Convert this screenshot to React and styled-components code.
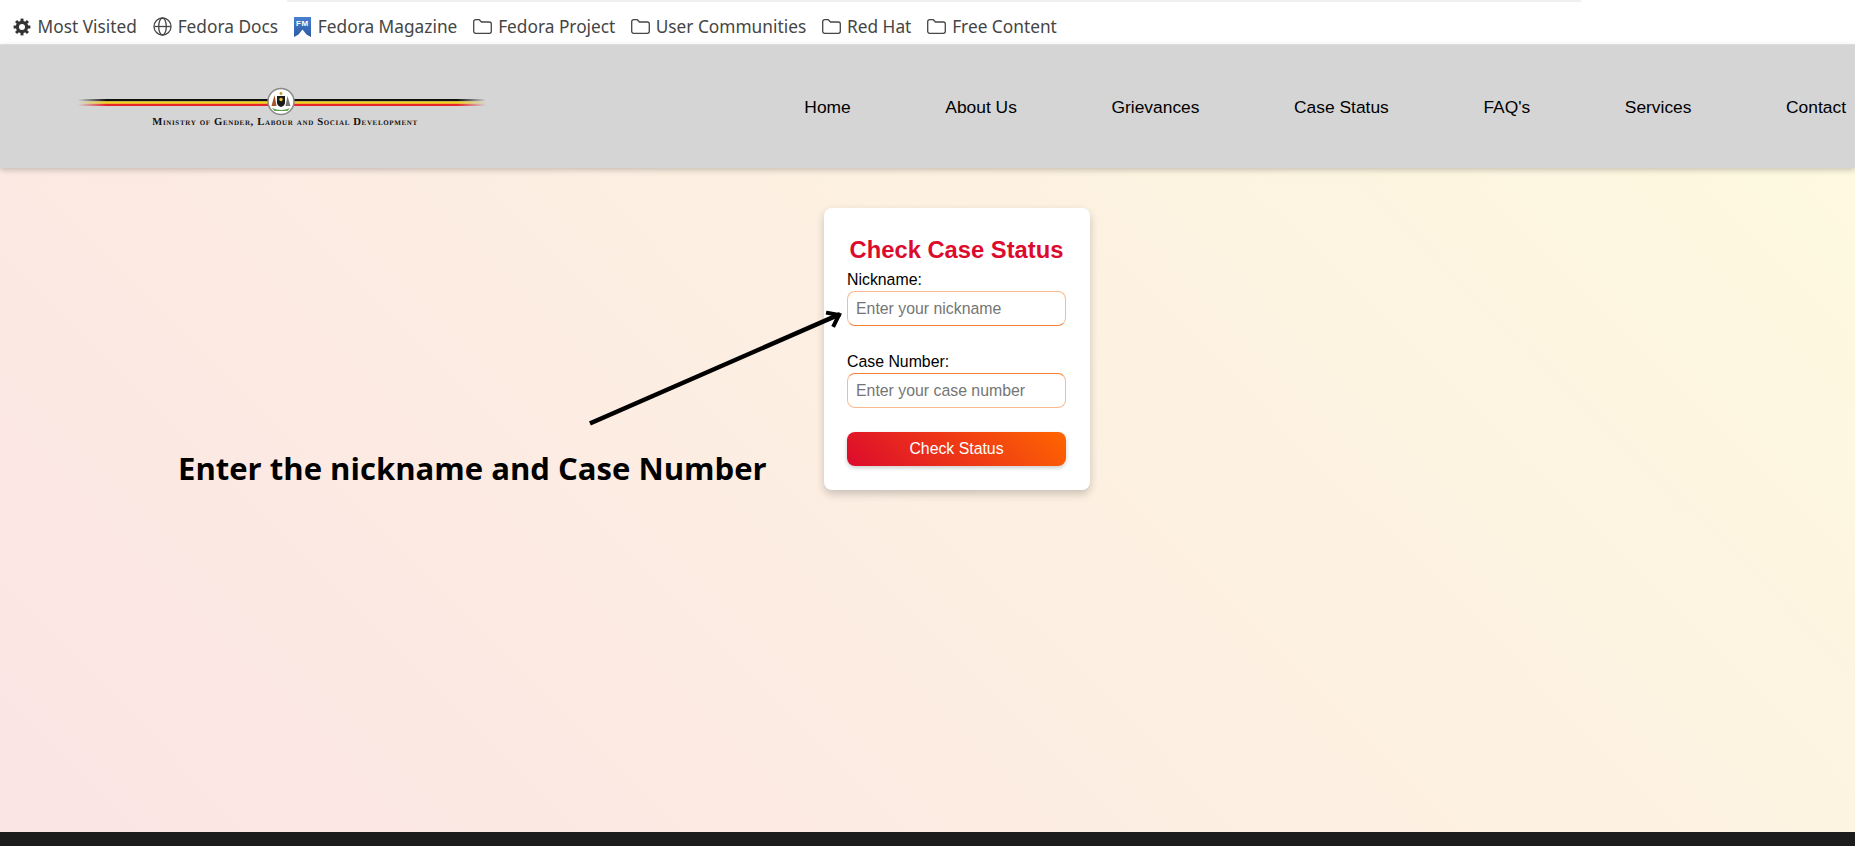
import React from "react";
import styled, { createGlobalStyle } from "styled-components";

const Global = createGlobalStyle`
  html, body { margin: 0; padding: 0; background: #fff; }
  body { font-family: "Liberation Sans", Arial, sans-serif; }
  * { box-sizing: border-box; }
`;
const Page = styled.div`
  width: 1855px; height: 846px; overflow: hidden;
  display: flex; flex-direction: column; position: relative;
`;
const TopStrip = styled.div`
  position: absolute; left: 287px; top: 0; width: 1294px; height: 2px; background: #f0f0f0;
`;
const BookmarksBar = styled.nav`
  height: 45px; flex: none; display: flex; align-items: center; gap: 15.8px;
  padding: 9px 0 0 12.5px; background: #fff; border-bottom: 1px solid #e6e6e6;
  font-family: "Noto Sans", sans-serif; font-size: 17.3px; color: #454545;
`;
const Bookmark = styled.a`
  display: inline-flex; align-items: center; gap: ${p => p.$gap}px; white-space: nowrap;
  svg { flex: none; display: block; }
`;
const Header = styled.header`
  height: 123px; flex: none; display: flex; align-items: center; justify-content: space-between;
  padding: 0 9px 0 78px; background: #d5d5d5; box-shadow: 0 2px 6px rgba(0,0,0,.22);
  position: relative; z-index: 2;
`;
const Logo = styled.div`
  width: 408px; display: flex; flex-direction: column; align-items: center; margin-top: 2px;
`;
const LogoCaption = styled.div`
  font-family: "Liberation Serif", serif; font-weight: 700; font-variant: small-caps;
  font-size: 10.7px; letter-spacing: .64px; color: #111; white-space: nowrap; line-height: 12px; margin: -1px 0 0 6px;
  text-rendering: geometricPrecision;
`;
const NavList = styled.ul`
  list-style: none; margin: 1px 0 0; padding: 0; display: flex; gap: 94.6px;
`;
const NavLink = styled.li`
  font-size: 17.4px; color: #000; white-space: nowrap;
`;
const Main = styled.main`
  flex: 1; position: relative; padding: 40px 0 0 824px;
  background: linear-gradient(45deg, #fbe4e4 0%, #fef9e0 100%);
`;
const Card = styled.section`
  width: 266px; height: 282px; padding: 28px 24px 24px 23px; background: #fff; border-radius: 8px;
  box-shadow: 0 4px 8px rgba(0,0,0,.2);
`;
const Title = styled.h2`
  margin: 0 0 7px; font-size: 23.75px; line-height: 28px; font-weight: 700; color: #dc0a2d; text-align: center; white-space: nowrap;
`;
const Field = styled.div`
  margin-bottom: ${p => p.$gap}px;
`;
const Label = styled.label`
  display: block; font-size: 15.85px; line-height: 18px; margin-bottom: 2px; color: #000;
`;
const Input = styled.input`
  display: block; width: 100%; height: 35px; padding: 0 8px; border: 1px solid #fcb98d; border-radius: 8px;
  border-${p => p.$strong}-color: #f57f30;
  font: 15.85px "Liberation Sans", Arial, sans-serif; background: #fff; outline: none;
  &::placeholder { color: #757575; opacity: 1; }
`;
const Submit = styled.button`
  display: block; width: 100%; height: 34px; border: 0; border-radius: 8px; color: #fff;
  font: 15.85px "Liberation Sans", Arial, sans-serif;
  background: linear-gradient(45deg, #dc0a2d, #ff6600); box-shadow: 0 2px 4px rgba(0,0,0,.2);
`;
const Note = styled.p`
  position: absolute; left: 178px; top: 278px; margin: 0; font-family: "Open Sans", sans-serif;
  font-weight: 700; font-size: 31.05px; line-height: 44px; color: #000; white-space: nowrap;
`;
const ArrowLayer = styled.svg`
  position: absolute; left: 0; top: 0; pointer-events: none;
`;
const Footer = styled.footer`
  height: 14px; flex: none; background: #1c1c1c;
`;

const Gear = () => (
  <svg width="18" height="18" viewBox="0 0 18 18" fill="none" stroke="#333">
    <circle cx="9" cy="9" r="4.8" strokeWidth="2.8" />
    <g strokeWidth="3">
      {[0, 45, 90, 135].map(a => <line key={a} x1="9" y1="0.6" x2="9" y2="17.4" transform={`rotate(${a} 9 9)`} />)}
    </g>
    <circle cx="9" cy="9" r="3" fill="#fff" stroke="none" />
  </svg>
);
const Globe = () => (
  <svg width="19" height="19" viewBox="0 0 19 19" fill="none" stroke="#454545" strokeWidth="1.3">
    <circle cx="9.500" cy="9.500" r="8.500" />
    <ellipse cx="9.500" cy="9.500" rx="3.800" ry="8.500" />
    <path d="M1.400 9.500h16.200" />
  </svg>
);
const Magazine = () => (
  <svg width="17" height="20" viewBox="0 0 17 20">
    <defs>
      <linearGradient id="fm" x1="0" x2="0" y1="0" y2="1">
        <stop offset="0" stopColor="#4a7fd0" />
        <stop offset="1" stopColor="#2c5aa0" />
      </linearGradient>
    </defs>
    <path d="M0 0h17v20l-4.500-2.500L8.500 12.500 4.500 17.500 0 20z" fill="url(#fm)" />
    <text x="8.500" y="9" textAnchor="middle" fontFamily="Liberation Sans" fontWeight="700" fontSize="8" letterSpacing=".6" fill="#fff">FM</text>
  </svg>
);
const Folder = () => (
  <svg width="19" height="15" viewBox="0 0 19 15" fill="none" stroke="#454545" strokeWidth="1.3" strokeLinejoin="round">
    <path d="M.7 2.700A2 2 0 0 1 2.700.7h3.600l2.200 2.300h7.800a2 2 0 0 1 2 2v7.300a2 2 0 0 1-2 2H2.700a2 2 0 0 1-2-2z" />
  </svg>
);
const Flag = () => (
  <svg width="408" height="30" viewBox="0 0 408 30">
    <defs>
      <linearGradient id="fade" x1="0" x2="1" y1="0" y2="0">
        <stop offset="0" stopColor="#fff" stopOpacity="0" />
        <stop offset=".07" stopColor="#fff" stopOpacity="1" />
        <stop offset=".93" stopColor="#fff" stopOpacity="1" />
        <stop offset="1" stopColor="#fff" stopOpacity="0" />
      </linearGradient>
      <mask id="fadeMask"><rect width="408" height="30" fill="url(#fade)" /></mask>
    </defs>
    <g mask="url(#fadeMask)">
      <rect x="0" y="12" width="408" height="2.400" fill="#111" />
      <rect x="0" y="14.400" width="408" height="2.400" fill="#f7d416" />
      <rect x="0" y="16.800" width="408" height="2.200" fill="#e5252a" />
    </g>
    <circle cx="203" cy="14.500" r="13" fill="#fff" stroke="#8a8a8a" strokeWidth="1.500" />
    <path d="M199 9h8v6.500q0 3-4 4.500q-4-1.500-4-4.500z" fill="#1a1a1a" />
    <circle cx="203" cy="12.500" r="1.700" fill="#e9c53a" />
    <path d="M193.500 19l3-11 2 11z" fill="#a5562a" />
    <path d="M212.500 19l-3-10-2 10z" fill="#777" />
    <path d="M194 21q9 4 18 0l-2.500 3h-13z" fill="#5fa052" />
    <circle cx="203" cy="6.500" r="1.400" fill="#c9962e" />
  </svg>
);

const items = [
  ["Most Visited", Gear, 7], ["Fedora Docs", Globe, 6], ["Fedora Magazine", Magazine, 7], ["Fedora Project", Folder, 6],
  ["User Communities", Folder, 5.5], ["Red Hat", Folder, 6], ["Free Content", Folder, 6],
];
const nav = ["Home", "About Us", "Grievances", "Case Status", "FAQ's", "Services", "Contact"];

export default function App() {
  return (
    <Page>
      <Global />
      <TopStrip />
      <BookmarksBar>
        {items.map(([t, I, g]) => <Bookmark key={t} $gap={g}><I />{t}</Bookmark>)}
      </BookmarksBar>
      <Header>
        <Logo>
          <Flag />
          <LogoCaption>Ministry of Gender, Labour and Social Development</LogoCaption>
        </Logo>
        <NavList>{nav.map(n => <NavLink key={n}>{n}</NavLink>)}</NavList>
      </Header>
      <Main>
        <Card>
          <Title>Check Case Status</Title>
          <Field $gap={27}>
            <Label>Nickname:</Label>
            <Input $strong="bottom" placeholder="Enter your nickname" />
          </Field>
          <Field $gap={24}>
            <Label>Case Number:</Label>
            <Input $strong="top" placeholder="Enter your case number" />
          </Field>
          <Submit>Check Status</Submit>
        </Card>
        <Note>Enter the nickname and Case Number</Note>
        <ArrowLayer width="900" height="300">
          <g fill="none" stroke="#000" strokeLinecap="square">
            <path d="M592 254.500L838 147" strokeWidth="4.500" />
            <path d="M828 145L839 147L834 157" strokeWidth="4" />
          </g>
        </ArrowLayer>
      </Main>
      <Footer />
    </Page>
  );
}
